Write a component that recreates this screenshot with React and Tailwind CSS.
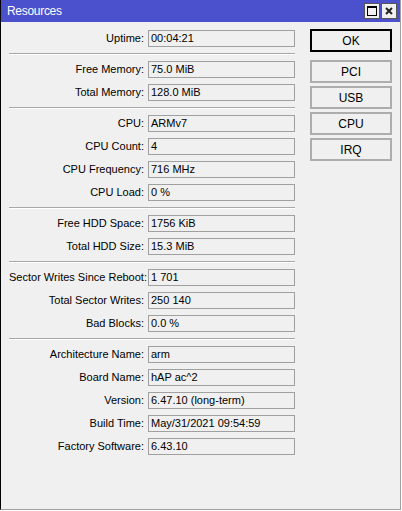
const groups = [
  [["Uptime", "00:04:21"]],
  [
    ["Free Memory", "75.0 MiB"],
    ["Total Memory", "128.0 MiB"],
  ],
  [
    ["CPU", "ARMv7"],
    ["CPU Count", "4"],
    ["CPU Frequency", "716 MHz"],
    ["CPU Load", "0 %"],
  ],
  [
    ["Free HDD Space", "1756 KiB"],
    ["Total HDD Size", "15.3 MiB"],
  ],
  [
    ["Sector Writes Since Reboot", "1 701"],
    ["Total Sector Writes", "250 140"],
    ["Bad Blocks", "0.0 %"],
  ],
  [
    ["Architecture Name", "arm"],
    ["Board Name", "hAP ac^2"],
    ["Version", "6.47.10 (long-term)"],
    ["Build Time", "May/31/2021 09:54:59"],
    ["Factory Software", "6.43.10"],
  ],
];

const buttons = ["PCI", "USB", "CPU", "IRQ"];

function Field({ label, value }) {
  return (
    <div className="flex h-[17px] items-center gap-[4px]">
      <div className="w-[135px] text-right whitespace-nowrap">{label}:</div>
      <div className="flex h-[17px] w-[147px] items-center border border-[#a0a0a0] px-[2px] whitespace-nowrap">
        {value}
      </div>
    </div>
  );
}

export default function App() {
  return (
    <div className="h-[511px] w-[402px] bg-white font-['Liberation_Sans',Arial,sans-serif] text-[11px] text-black">
      <div className="flex h-[510px] w-[401px] flex-col border-r border-b border-l border-r-[#a0a0a0] border-b-[#a0a0a0] border-l-black bg-[#f0f0f0]">
        <div className="flex h-[22px] items-center justify-between bg-[#4b50cc] pl-[6px] pr-[3px]">
          <span className="text-[12px] tracking-[-0.3px] text-white">Resources</span>
          <div className="flex gap-[1px]">
            <div className="flex h-[16px] w-[16px] items-center justify-center border border-[#555] bg-[#f0f0f0]">
              <div className="h-[10px] w-[10px] border border-black border-t-2" />
            </div>
            <div className="flex h-[16px] w-[16px] items-center justify-center border border-[#555] bg-[#f0f0f0]">
              <svg width="10" height="10" viewBox="0 0 10 10">
                <path d="M2 2 L8 8 M8 2 L2 8" stroke="#222" strokeWidth="2" />
              </svg>
            </div>
          </div>
        </div>
        <div className="flex pt-[8px] pl-[8px]">
          <div className="flex w-[286px] flex-col gap-[6px]">
            {groups.map((group, gi) => (
              <div key={gi} className="contents">
                {gi > 0 && <div className="h-[2px] border-t border-b border-t-[#a8a8a8] border-b-white" />}
                {group.map(([label, value]) => (
                  <Field key={label} label={label} value={value} />
                ))}
              </div>
            ))}
          </div>
          <div className="ml-[15px] flex w-[82px] flex-col gap-[3px] pt-[-1px] -mt-[1px] text-[12px]">
            <button className="mb-[5px] h-[23px] border-2 border-black bg-[#f0f0f0]">OK</button>
            {buttons.map((b) => (
              <button key={b} className="h-[23px] border-2 border-[#adadad] bg-[#f0f0f0]">
                {b}
              </button>
            ))}
          </div>
        </div>
      </div>
    </div>
  );
}
